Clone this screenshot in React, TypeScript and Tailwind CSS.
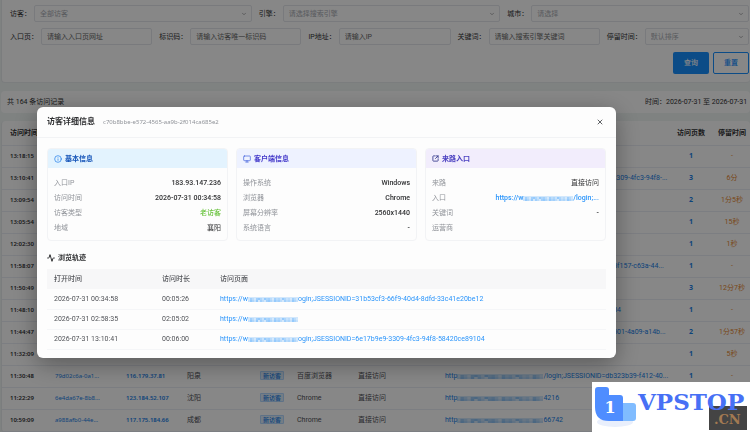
import type { ReactNode } from "react";
import { Activity, ChevronDown, Info, Monitor, SquareArrowOutUpRight, X } from "lucide-react";

/**
 * Visitor log page with the visitor detail dialog open.
 */

interface Visit {
  time: string;
  id?: string;
  ip?: string;
  region?: string;
  browser?: string;
  entry?: string;
  shortHost?: boolean;
  pages?: number;
  stay?: string;
}

const visits: Visit[] = [
  { time: "13:18:15", pages: 1, stay: "-" },
  { time: "13:10:41", entry: "/login;JSESSIONID=6e17b9e9-3309-4fc3-94f8-...", shortHost: true, pages: 3, stay: "6分" },
  { time: "13:09:54", pages: 2, stay: "1分5秒" },
  { time: "13:05:54", pages: 1, stay: "15秒" },
  { time: "12:02:30", pages: 1, stay: "1秒" },
  { time: "11:58:07", entry: "/login;JSESSIONID=0b5f157-c63a-44...", pages: 1, stay: "-" },
  { time: "11:50:49", pages: 3, stay: "12分7秒" },
  { time: "11:48:10", entry: "/login;JSESSIONID=3104", pages: 1, stay: "-" },
  { time: "11:44:47", entry: "/login;JSESSIONID=3b501-4a09-a14b...", pages: 2, stay: "1分57秒" },
  { time: "11:32:09", pages: 1, stay: "5秒" },
  { time: "11:30:48", id: "79d02c6a-0a1...", ip: "116.179.37.81", region: "阳泉", browser: "百度浏览器", entry: "/login;JSESSIONID=db323b39-f412-40...", pages: 1, stay: "-" },
  { time: "11:22:29", id: "6e4da67e-8b8...", ip: "123.184.52.107", region: "沈阳", browser: "Chrome", entry: "4216" },
  { time: "10:59:09", id: "a988afb0-44e...", ip: "117.175.184.66", region: "成都", browser: "Chrome", entry: "66742" },
];

const tracks = [
  { time: "2026-07-31 00:34:58", duration: "00:05:26", rest: "ogin;JSESSIONID=31b53cf3-66f9-40d4-8dfd-33c41e20be12" },
  { time: "2026-07-31 02:58:35", duration: "02:05:02", rest: "" },
  { time: "2026-07-31 13:10:41", duration: "00:06:00", rest: "ogin;JSESSIONID=6e17b9e9-3309-4fc3-94f8-58420ce89104" },
];

// Pixelated strip that hides the host name of a URL
function Mosaic({ className }: { className: string }) {
  const cells = Array.from({ length: 50 }, (_, i) => i);
  return (
    <svg
      className={`inline-block h-[6px] align-middle ${className}`}
      viewBox="0 0 50 6"
      preserveAspectRatio="none"
      aria-hidden="true"
    >
      <rect y="1" width="50" height="5" fill="currentColor" opacity="0.2" />
      {cells.map((i) => (
        <rect
          key={i}
          x={(i % 25) * 2}
          y={i < 25 ? 2 : 4}
          width="2"
          height="2"
          fill="currentColor"
          opacity={((i * 7 + (i % 5) * 3) % 6) / 14}
        />
      ))}
    </svg>
  );
}

function SelectField({ id, label, value }: { id: string; label: string; value: string }) {
  return (
    <div className="flex min-w-0 items-center">
      <label htmlFor={id} className="shrink-0 pr-[3px] text-[#303133]">{label}：</label>
      <div className="relative min-w-0 flex-1">
        <select
          id={id}
          className="h-[17px] w-full appearance-none rounded-[2px] border border-[#e4e7ed] bg-white pl-[5px] text-[#a8abb2]"
        >
          <option>{value}</option>
        </select>
        <ChevronDown className="pointer-events-none absolute top-[6px] right-[5px] size-[6px] text-[#606266]" />
      </div>
    </div>
  );
}

function InputField({ id, label, placeholder }: { id: string; label: string; placeholder: string }) {
  return (
    <div className="flex min-w-0 items-center">
      <label htmlFor={id} className="shrink-0 pr-[3px] text-[#303133]">{label}：</label>
      <input
        id={id}
        placeholder={placeholder}
        className="h-[17px] min-w-0 flex-1 rounded-[2px] border border-[#e4e7ed] bg-white px-[5px] placeholder:text-[#666]"
      />
    </div>
  );
}

interface InfoCardProps {
  icon: ReactNode;
  title: string;
  headClass: string;
  rows: { label: string; value: ReactNode }[];
}

function InfoCard({ icon, title, headClass, rows }: InfoCardProps) {
  return (
    <section className="overflow-hidden rounded-[4px] border border-[#f2f3f5]">
      <h3 className={`flex h-[19px] items-center gap-[3px] px-[6px] font-bold ${headClass}`}>
        {icon}
        {title}
      </h3>
      <dl className="px-[6px] pt-[7px] pb-[5px]">
        {rows.map((row) => (
          <div key={row.label} className="flex h-[15px] items-center justify-between">
            <dt className="text-[#909399]">{row.label}</dt>
            <dd className="font-medium text-[#303133]">{row.value}</dd>
          </div>
        ))}
      </dl>
    </section>
  );
}

function VisitorDialog() {
  return (
    <div className="fixed inset-0 flex items-start bg-black/47 pt-[107px] pr-[134px] pl-[37px]">
      <div
        role="dialog"
        aria-labelledby="dialog-title"
        className="w-full rounded-[6px] bg-[#fdfdfd] shadow-[0_6px_24px_rgba(0,0,0,0.35)]"
      >
        <header className="flex h-[31px] items-center border-b border-[#f2f3f5] px-[10px]">
          <h2 id="dialog-title" className="text-[8px] font-bold text-[#303133]">访客详细信息</h2>
          <span className="ml-[8px] font-['Noto_Sans'] text-[6px] text-[#909399]">c70b8bbe-e572-4565-aa9b-2f014ca685e2</span>
          <button type="button" aria-label="关闭" className="ml-auto p-[2px] text-[#606266]">
            <X className="size-[8px]" strokeWidth={3} />
          </button>
        </header>

        <div className="px-[10px] pt-[10px] pb-[8px]">
          <div className="grid grid-cols-3 gap-2">
            <InfoCard
              icon={<Info className="size-[8px] text-[#1677e8]" />}
              title="基本信息"
              headClass="bg-[#e3f3fe] text-[#1554b8]"
              rows={[
                { label: "入口IP", value: "183.93.147.236" },
                { label: "访问时间", value: "2026-07-31 00:34:58" },
                { label: "访客类型", value: <span className="text-[#67c23a]">老访客</span> },
                { label: "地域", value: <span className="font-normal">襄阳</span> },
              ]}
            />
            <InfoCard
              icon={<Monitor className="size-[8px] text-[#3b5bdb]" />}
              title="客户端信息"
              headClass="bg-[#eef2ff] text-[#4338ca]"
              rows={[
                { label: "操作系统", value: "Windows" },
                { label: "浏览器", value: "Chrome" },
                { label: "屏幕分辨率", value: "2560x1440" },
                { label: "系统语言", value: "-" },
              ]}
            />
            <InfoCard
              icon={<SquareArrowOutUpRight className="size-[7px] text-[#3b3f8f]" strokeWidth={3} />}
              title="来路入口"
              headClass="bg-[#f2edfc] text-[#4a3fc0]"
              rows={[
                { label: "来路", value: <span className="font-normal">直接访问</span> },
                {
                  label: "入口",
                  value: (
                    <a href="#entry" className="text-[#2b95fb]">
                      https://w<Mosaic className="w-[50px]" />/login;...
                    </a>
                  ),
                },
                { label: "关键词", value: "-" },
                { label: "运营商", value: "" },
              ]}
            />
          </div>

          <h3 className="flex h-[28px] items-center gap-[3px] pt-[6px] font-bold text-[#303133]">
            <Activity className="size-[8px]" strokeWidth={3} />
            浏览轨迹
          </h3>
          <table className="w-full table-fixed text-left text-[#505257]">
            <colgroup>
              <col className="w-[108px]" />
              <col className="w-[58px]" />
              <col />
            </colgroup>
            <thead className="bg-[#f7f7f8]">
              <tr className="h-[20px]">
                <th className="px-[7px] font-medium">打开时间</th>
                <th className="px-[7px] font-medium">访问时长</th>
                <th className="px-[7px] font-medium">访问页面</th>
              </tr>
            </thead>
            <tbody>
              {tracks.map((track) => (
                <tr key={track.time} className="h-[20px] border-b border-[#f5f6f8]">
                  <td className="px-[7px]">{track.time}</td>
                  <td className="px-[7px]">{track.duration}</td>
                  <td className="px-[7px] whitespace-nowrap">
                    <a href="#page" className="text-[#2b95fb]">
                      https://w<Mosaic className="w-[50px]" />{track.rest}
                    </a>
                  </td>
                </tr>
              ))}
            </tbody>
          </table>
        </div>
      </div>
    </div>
  );
}

function SiteBadge() {
  return (
    <div className="fixed right-0 bottom-0 h-[50px] w-[158px] bg-white">
      <svg viewBox="0 0 158 50" className="size-full" role="img" aria-label="VPSTOP.CN">
        <ellipse cx="23" cy="40" rx="18" ry="5" fill="#e9effc" />
        <path d="M3 8Q3 5 6 5H14Q17 5 17 8V13H28Q31 13 31 16V39H17Q3 39 3 25Z" fill="#4f8dff" />
        <path d="M31 21H41Q44 21 44 24V36Q44 39 41 39H31Z" fill="#80bcff" />
        <text x="18" y="31" fontSize="16" fontWeight="700" fill="#fff" textAnchor="middle" fontFamily="'DejaVu Serif', serif">1</text>
        <rect x="117" y="24" width="38" height="24" fill="#444" />
        <text x="46" y="28" fontSize="23" fontWeight="700" fill="#4770f5" fontFamily="'DejaVu Serif', serif">VPSTOP</text>
        <text x="122" y="42" fontSize="13" fontWeight="700" fill="#a37a52" fontFamily="'DejaVu Serif', serif">.CN</text>
      </svg>
    </div>
  );
}

export default function App() {
  return (
    <div className="h-screen overflow-hidden bg-[#f0f5f4] font-['Roboto','Noto_Sans_CJK_SC',sans-serif] text-[7px] leading-[10px]">
      <main className="flex flex-col gap-[8px] pl-px">
        <form className="flex flex-col gap-[6px] rounded-b-[4px] border-b border-l border-[#e8ecee] bg-white pt-[5px] pr-px pb-[8px] pl-[8px]">
          <div className="grid grid-cols-3 gap-[7px]">
            <SelectField id="visitor" label="访客" value="全部访客" />
            <SelectField id="engine" label="引擎" value="请选择搜索引擎" />
            <SelectField id="city" label="城市" value="请选择" />
          </div>
          <div className="grid grid-cols-5 gap-[7px]">
            <InputField id="entry-page" label="入口页" placeholder="请输入入口页网址" />
            <InputField id="visitor-code" label="标识码" placeholder="请输入访客唯一标识码" />
            <InputField id="ip" label="IP地址" placeholder="请输入IP" />
            <InputField id="keyword" label="关键词" placeholder="请输入搜索引擎关键词" />
            <SelectField id="stay" label="停留时间" value="默认排序" />
          </div>
          <div className="flex justify-end gap-[4px] pt-px">
            <button type="submit" className="h-[22px] w-[36px] rounded-[2px] bg-[#1890ff] font-medium text-white">查询</button>
            <button type="reset" className="h-[22px] w-[36px] rounded-[2px] border border-[#1890ff] font-medium text-[#1890ff]">重置</button>
          </div>
        </form>

        <div className="flex h-[22px] items-center justify-between rounded-[4px] bg-white pl-[6px] whitespace-nowrap text-[#303133]">
          <p>共 164 条访问记录</p>
          <p className="w-[105px] overflow-hidden">时间：2026-07-31 至 2026-07-31</p>
        </div>

        <div className="rounded-[4px] border-l border-[#e8ecee] bg-white">
          <table className="w-full table-fixed text-left whitespace-nowrap text-[#505257]">
            <colgroup>
              <col className="w-[53px]" />
              <col className="w-[71px]" />
              <col className="w-[61px]" />
              <col className="w-[73px]" />
              <col className="w-[37px]" />
              <col className="w-[61px]" />
              <col className="w-[87px]" />
              <col />
              <col className="w-[46px]" />
              <col className="w-[36px]" />
            </colgroup>
            <thead>
              <tr className="h-[24px] border-b border-[#ebeef5] text-[#303133]">
                <th className="pl-[8px] font-semibold">访问时间</th>
                <th colSpan={7} />
                <th className="text-center font-semibold">访问页数</th>
                <th className="text-center font-semibold">停留时间</th>
              </tr>
            </thead>
            <tbody>
              {visits.map((visit) => (
                <tr key={visit.time} className="h-[22px] border-b border-[#ebeef5]">
                  <td className="pl-[8px] font-['Noto_Sans'] text-[6px] font-semibold text-[#303133]">{visit.time}</td>
                  <td className="font-['Noto_Sans'] text-[6px]">
                    {visit.id && <a href="#visitor" className="text-[#1880e8]">{visit.id}</a>}
                  </td>
                  <td className="font-['Noto_Sans'] text-[6px] font-semibold text-[#1880e8]">{visit.ip}</td>
                  <td>{visit.region}</td>
                  <td>
                    {visit.id && (
                      <span className="rounded-[1px] border border-[#b3d8ff] bg-[#dcecfc] px-[2px] text-[6px] font-medium text-[#1880e8]">
                        新访客
                      </span>
                    )}
                  </td>
                  <td>{visit.browser}</td>
                  <td>{visit.id && "直接访问"}</td>
                  <td>
                    {visit.entry && (
                      <a href="#entry" className="text-[#1880e8]">
                        http<Mosaic className={visit.shortHost ? "w-[60px]" : "w-[86px]"} />{visit.entry}
                      </a>
                    )}
                  </td>
                  <td className="text-center font-['Noto_Sans'] font-bold text-[#1880e8]">{visit.pages}</td>
                  <td className="text-center text-[#e6862e]">{visit.stay}</td>
                </tr>
              ))}
            </tbody>
          </table>
        </div>
      </main>

      <VisitorDialog />
      <SiteBadge />
    </div>
  );
}
